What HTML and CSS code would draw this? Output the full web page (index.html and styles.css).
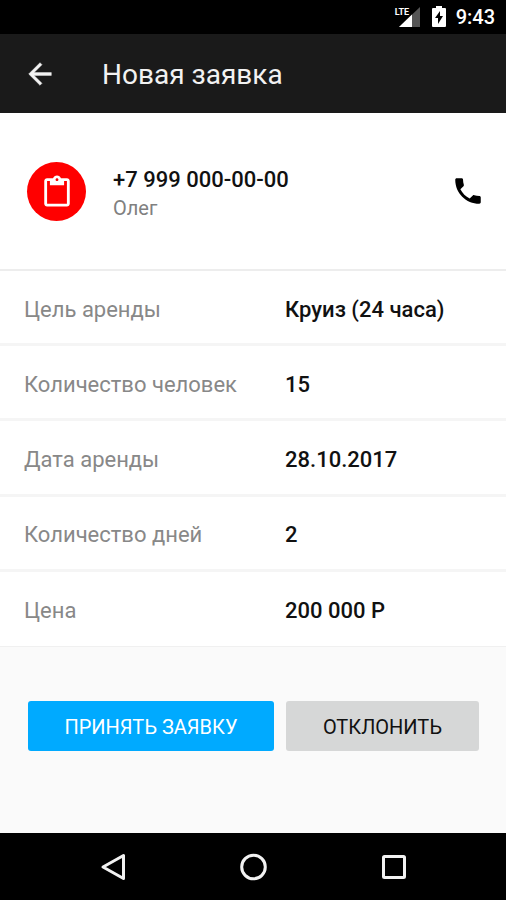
FILE: index.html
```html
<!DOCTYPE html>
<html lang="ru">
<head>
<meta charset="utf-8">
<meta name="viewport" content="width=device-width, initial-scale=1">
<title>Новая заявка</title>
<link rel="stylesheet" href="styles.css">
</head>
<body>
<div class="screen">
  <div class="status-bar">
    <div class="signal">
      <svg width="28" height="24" viewBox="0 0 28 24" aria-hidden="true">
        <path d="M28 2v20H7z" fill="#555"/>
        <path d="M20 9.500v12.500H7z" fill="#fff"/>
      </svg>
      <span class="network">LTE</span>
    </div>
    <svg width="14" height="22" viewBox="0 0 14 22" aria-hidden="true">
      <path d="M4 0h6v2h3q1 0 1 1v17q0 1-1 1H1q-1 0-1-1V3q0-1 1-1h3z" fill="#fff"/>
      <path d="M8 5v5h3l-5 8v-6H3z" fill="#000"/>
    </svg>
    <time class="clock">9:43</time>
  </div>

  <header class="app-bar">
    <button class="icon-button back" type="button" aria-label="Назад">
      <svg width="34" height="34" viewBox="0 0 24 24"><path d="M20 11H7.83l5.59-5.59L12 4l-8 8 8 8 1.41-1.41L7.83 13H20v-2z" fill="#f2f2f2" stroke="#f2f2f2" stroke-width=".3"/></svg>
    </button>
    <h1 class="title">Новая заявка</h1>
  </header>

  <main class="content">
    <section class="contact">
      <div class="avatar">
        <svg width="34" height="34" viewBox="0 -1 24 24" aria-hidden="true"><path d="M19 2h-4.18C14.4.84 13.3 0 12 0c-1.3 0-2.4.84-2.82 2H5c-1.1 0-2 .9-2 2v16c0 1.1.9 2 2 2h14c1.1 0 2-.9 2-2V4c0-1.1-.9-2-2-2zm-7 0c.55 0 1 .45 1 1s-.45 1-1 1-1-.45-1-1 .45-1 1-1zm7 18H5V4h2v3h10V4h2v16z" fill="#fff"/></svg>
      </div>
      <div class="person">
        <div class="phone">+7 999 000-00-00</div>
        <div class="name">Олег</div>
      </div>
      <a class="call" href="tel:+79990000000" aria-label="Позвонить">
        <svg width="34" height="34" viewBox="0 0 24 24"><path d="M6.62 10.79c1.44 2.83 3.76 5.14 6.59 6.59l2.2-2.2c.27-.27.67-.36 1.02-.24 1.12.37 2.33.57 3.57.57.55 0 1 .45 1 1V20c0 .55-.45 1-1 1-9.39 0-17-7.61-17-17 0-.55.45-1 1-1h3.5c.55 0 1 .45 1 1 0 1.25.2 2.45.57 3.57.11.35.03.74-.25 1.02l-2.2 2.2z" fill="#000"/></svg>
      </a>
    </section>

    <dl class="details">
      <div class="row"><dt>Цель аренды</dt><dd>Круиз (24 часа)</dd></div>
      <div class="row"><dt>Количество человек</dt><dd>15</dd></div>
      <div class="row"><dt>Дата аренды</dt><dd>28.10.2017</dd></div>
      <div class="row"><dt>Количество дней</dt><dd>2</dd></div>
      <div class="row"><dt>Цена</dt><dd>200 000 Р</dd></div>
    </dl>

    <div class="actions">
      <button class="button accept" type="button">ПРИНЯТЬ ЗАЯВКУ</button>
      <button class="button decline" type="button">ОТКЛОНИТЬ</button>
    </div>
  </main>

  <nav class="nav-bar" aria-label="Системная навигация">
    <button class="icon-button" type="button" aria-label="Назад">
      <svg width="32" height="32" viewBox="0 0 32 32"><path d="M27.500 4.500v23L7 16z"/></svg>
    </button>
    <button class="icon-button" type="button" aria-label="Домой">
      <svg width="32" height="32" viewBox="0 0 32 32"><circle cx="16.500" cy="16" r="11.800"/></svg>
    </button>
    <button class="icon-button" type="button" aria-label="Недавние">
      <svg width="32" height="32" viewBox="0 0 32 32"><rect x="5.500" y="5.500" width="21" height="21" rx="1"/></svg>
    </button>
  </nav>
</div>
</body>
</html>
```
FILE: styles.css
```css
* {
  box-sizing: border-box;
}

body {
  margin: 0;
  font-family: Roboto, "Liberation Sans", sans-serif;
  font-size: 22px;
  color: #111;
  background: #fafafa;
}

.screen {
  display: flex;
  flex-direction: column;
  min-height: 100vh;
}

.status-bar {
  display: flex;
  align-items: center;
  justify-content: flex-end;
  gap: 12px;
  height: 34px;
  padding-right: 11px;
  background: #000;
  color: #fff;
}

.signal {
  position: relative;
  display: flex;
}

.network {
  position: absolute;
  top: 1px;
  left: 3px;
  font-size: 9px;
  line-height: 12px;
  font-weight: 700;
}

.clock {
  margin-left: -2px;
  font-size: 20px;
  line-height: 24px;
  font-weight: 500;
}

.app-bar {
  display: flex;
  align-items: center;
  gap: 45px;
  height: 79px;
  padding: 0 23px;
  background: #1a1a1a;
}

.icon-button {
  display: flex;
  padding: 0;
  border: 0;
  background: none;
  cursor: pointer;
}

.title {
  margin: 0;
  padding-top: 2px;
  font-size: 28px;
  line-height: 36px;
  font-weight: 400;
  color: #f2f2f2;
}

.content {
  display: flex;
  flex: 1;
  flex-direction: column;
}

.contact {
  display: flex;
  align-items: center;
  height: 158px;
  padding: 0 21px 0 27px;
  border-bottom: 2px solid #ededed;
  background: #fff;
}

.avatar {
  display: flex;
  align-items: center;
  justify-content: center;
  width: 59px;
  height: 59px;
  border-radius: 50%;
  background: #f00;
}

.person {
  flex: 1;
  padding: 6px 0 0 27px;
}

.phone {
  line-height: 28px;
  font-weight: 500;
}

.name {
  font-size: 20px;
  line-height: 28px;
  color: #808080;
}

.call {
  display: flex;
}

.details {
  display: grid;
  flex: 1;
  grid-auto-rows: 1fr;
  margin: 0;
  background: #fff;
}

.row {
  display: grid;
  grid-template-columns: 57% 1fr;
  align-items: center;
  padding: 4px 24px 0;
  border-bottom: 3px solid #f5f5f5;
}

.row:last-child {
  border-bottom: 1px solid #f0f0f0;
}

.row dt {
  color: #888;
}

.row dd {
  margin: 0;
  font-weight: 500;
}

.actions {
  display: flex;
  gap: 12px;
  padding: 54px 27px 82px 28px;
}

.button {
  height: 50px;
  padding: 2px 0 0;
  border: 0;
  border-radius: 3px;
  font-family: inherit;
  font-size: 20px;
  cursor: pointer;
}

.accept {
  flex: 14;
  background: #00aaff;
  color: #fff;
}

.decline {
  flex: 11;
  background: #d6d7d7;
  color: #111;
}

.nav-bar {
  display: flex;
  align-items: center;
  justify-content: space-between;
  height: 67px;
  padding: 0 96px;
  background: #000;
}

.nav-bar svg {
  fill: none;
  stroke: #f2f2f2;
  stroke-width: 3;
  stroke-linejoin: round;
}
```
